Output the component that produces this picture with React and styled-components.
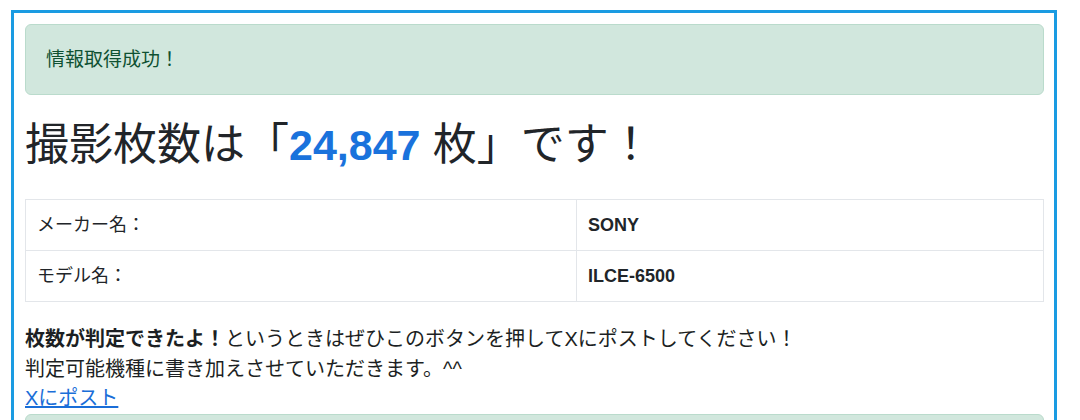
import React from "react";
import styled, { createGlobalStyle } from "styled-components";

const Global = createGlobalStyle`
  html, body { margin: 0; padding: 0; background: #ffffff; }
  body {
    font-family: "Liberation Sans", "Noto Sans CJK JP", sans-serif;
    color: #212529;
    font-size: 19px;
    line-height: 1.5;
  }
`;

const Frame = styled.div`
  margin: 10px 0 0 11px;
  width: 1046px;
  box-sizing: border-box;
  border: 3px solid #1a9be2;
  padding: 11px 10px 11px 11px;
  min-height: 500px;
`;

const Alert = styled.div`
  background: #d1e7dd;
  border: 1px solid #badbcc;
  border-radius: 6px;
  color: #0f5132;
  padding: 21px 20px;
  font-size: 19px;
  line-height: 27px;
`;

const Title = styled.h1`
  margin: 22px 0 26px;
  font-size: 44px;
  font-weight: 400;
  line-height: 55px;
  color: #212529;
`;

const Count = styled.span`
  color: #1a72dc;
  font-weight: 700;
  font-size: 43px;
`;

const Table = styled.table`
  width: 100%;
  border-collapse: collapse;
`;

const Cell = styled.td`
  border: 1px solid #e3e6ea;
  padding: 12px 11px;
  font-size: 18px;
  line-height: 26px;
  font-weight: ${(p) => (p.$strong ? 700 : 400)};
  width: ${(p) => (p.$label ? "528px" : "auto")};
`;

const Note = styled.p`
  margin: 23px 0 0;
  font-size: 20px;
  line-height: 29.5px;
  color: #1c1f23;
`;

const Link = styled.a`
  color: #1a6ed8;
  text-decoration: underline;
`;

const NextAlert = styled(Alert)`
  margin-top: 0;
  height: 60px;
`;

export default function App() {
  return (
    <>
      <Global />
      <Frame>
        <Alert>情報取得成功！</Alert>
        <Title>
          撮影枚数は「<Count>24,847</Count> 枚」です！
        </Title>
        <Table>
          <tbody>
            <tr>
              <Cell $label>メーカー名：</Cell>
              <Cell $strong>SONY</Cell>
            </tr>
            <tr>
              <Cell $label>モデル名：</Cell>
              <Cell $strong>ILCE-6500</Cell>
            </tr>
          </tbody>
        </Table>
        <Note>
          <strong>枚数が判定できたよ！</strong>
          というときはぜひこのボタンを押してXにポストしてください！
          <br />
          判定可能機種に書き加えさせていただきます。^^
          <br />
          <Link href="#">Xにポスト</Link>
        </Note>
        <NextAlert />
      </Frame>
    </>
  );
}
